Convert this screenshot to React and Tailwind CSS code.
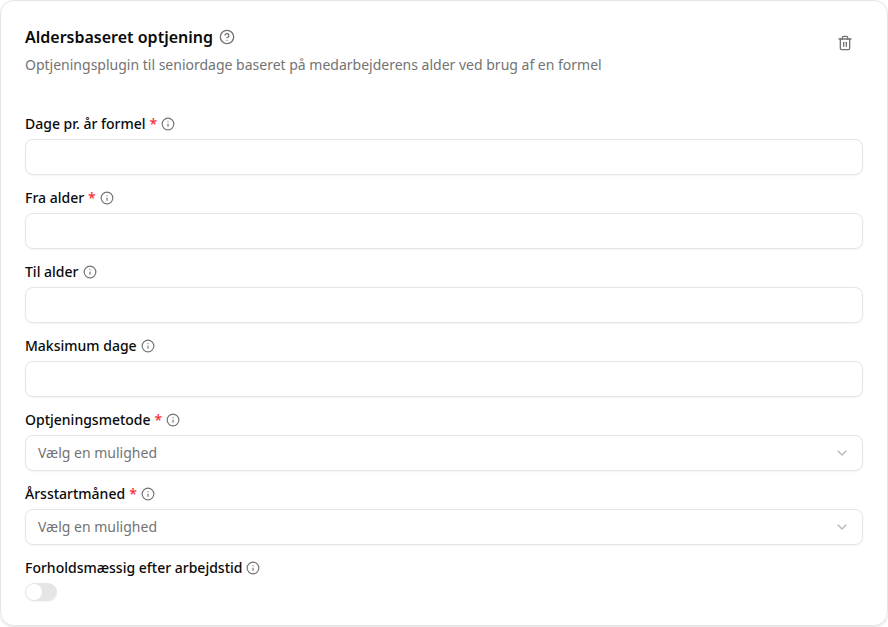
import { ChevronDown, CircleHelp, Info, Trash2 } from "lucide-react";

const fields = [
  { label: "Dage pr. år formel", required: true },
  { label: "Fra alder", required: true },
  { label: "Til alder" },
  { label: "Maksimum dage" },
  { label: "Optjeningsmetode", required: true, select: true },
  { label: "Årsstartmåned", required: true, select: true },
];

function Label({ label, required }) {
  return (
    <div className="flex h-3.5 items-center gap-1 text-sm leading-none font-medium">
      <span>{label}</span>
      {required && <span className="text-[#fb2c36]">*</span>}
      <Info className="size-3.5 text-[#737373]" />
    </div>
  );
}

export default function App() {
  return (
    <main className="h-[627px] w-full bg-white font-['Noto_Sans',sans-serif] text-[#0a0a0a]">
      <section className="h-[626px] rounded-[14px] border border-[#e5e5e5] px-6 pt-6 shadow-sm">
        <header className="flex justify-between">
          <div>
            <div className="flex h-6 items-center gap-1.5">
              <h1 className="text-base font-semibold">Aldersbaseret optjening</h1>
              <CircleHelp className="size-4 text-[#737373]" />
            </div>
            <p className="mt-1.5 text-sm text-[#737373]">
              Optjeningsplugin til seniordage baseret på medarbejderens alder ved brug af en formel
            </p>
          </div>
          <button aria-label="Slet" className="flex size-9 items-center justify-center text-[#737373]">
            <Trash2 className="size-4" />
          </button>
        </header>
        <form className="mt-[42px] flex flex-col gap-4">
          {fields.map((f) => (
            <div key={f.label} className="flex flex-col gap-2">
              <Label {...f} />
              {f.select ? (
                <button type="button" className="flex h-9 items-center justify-between rounded-lg border border-[#e5e5e5] px-3 text-sm text-[#737373] shadow-xs">
                  Vælg en mulighed
                  <ChevronDown className="size-4 opacity-50" />
                </button>
              ) : (
                <input aria-label={f.label} className="h-9 rounded-lg border border-[#e5e5e5] px-3 shadow-xs" />
              )}
            </div>
          ))}
          <div className="flex flex-col gap-2">
            <Label label="Forholdsmæssig efter arbejdstid" />
            <button type="button" role="switch" aria-checked="false" aria-label="Forholdsmæssig efter arbejdstid" className="flex h-[18.4px] w-8 items-center rounded-full border border-transparent bg-[#e5e5e5] shadow-xs">
              <span className="size-4 rounded-full bg-white" />
            </button>
          </div>
        </form>
      </section>
    </main>
  );
}
